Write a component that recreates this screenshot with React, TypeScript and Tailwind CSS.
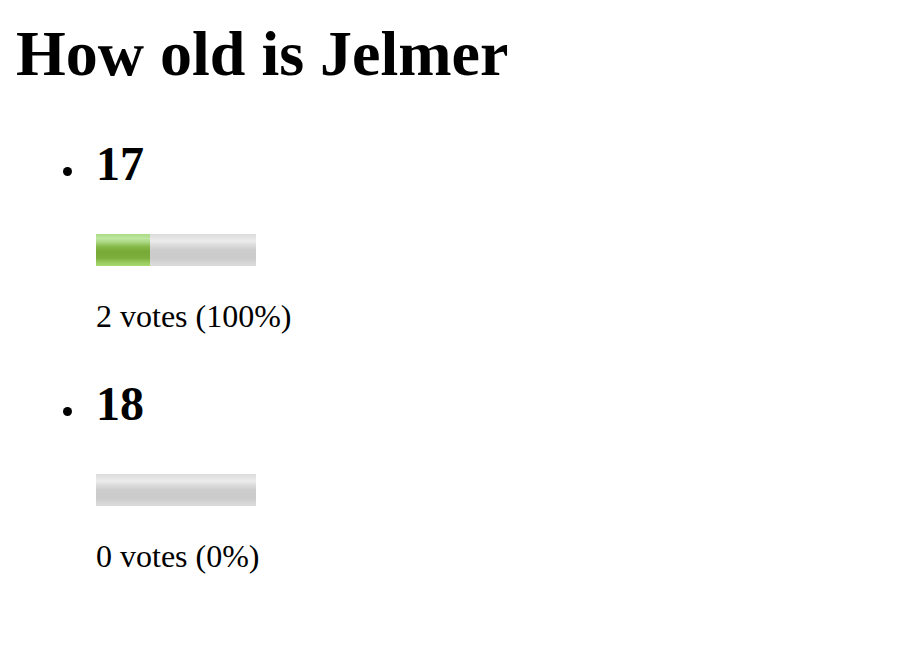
import { FC } from "react";

interface Option {
  label: string;
  votes: number;
  percent: number;
  fill: number; // px width of the green part
}

const options: Option[] = [
  { label: "17", votes: 2, percent: 100, fill: 54 },
  { label: "18", votes: 0, percent: 0, fill: 0 },
];

const Bar: FC<{ fill: number }> = ({ fill }) => (
  <div className="flex w-[160px] h-[32px] bg-[linear-gradient(to_bottom,#dcdcdc_0%,#e4e4e4_12%,#ececec_22%,#dadada_36%,#cdcdcd_50%,#cbcbcb_75%,#d6d6d6_90%,#dcdcdc_100%)]">
    {fill > 0 && (
      <div
        className="h-full bg-[linear-gradient(to_bottom,#a9db86_0%,#bfe6a1_14%,#a9d680_26%,#85b847_40%,#77aa36_55%,#7cae3c_75%,#96c95b_88%,#a8da70_100%)]"
        style={{ width: fill }}
      />
    )}
  </div>
);

const App: FC = () => {
  return (
    <div className="min-h-screen bg-white text-black font-['Liberation_Serif',serif] pl-4 pt-[17px]">
      <h1 className="text-[64px] leading-[74px] font-bold">How old is Jelmer</h1>
      <ul className="mt-[45px] flex flex-col gap-[41px]">
        {options.map((o) => (
          <li key={o.label} className="flex">
            <div className="ml-[47px] mt-[31px] w-[9px] h-[9px] rounded-full bg-black shrink-0" />
            <div className="ml-[24px] flex flex-col">
              <h2 className="text-[48px] leading-[56px] font-bold">{o.label}</h2>
              <div className="mt-[42px]">
                <Bar fill={o.fill} />
              </div>
              <p className="mt-[32px] text-[32px] leading-[37px]">
                {o.votes} votes ({o.percent}%)
              </p>
            </div>
          </li>
        ))}
      </ul>
    </div>
  );
};

export default App;
